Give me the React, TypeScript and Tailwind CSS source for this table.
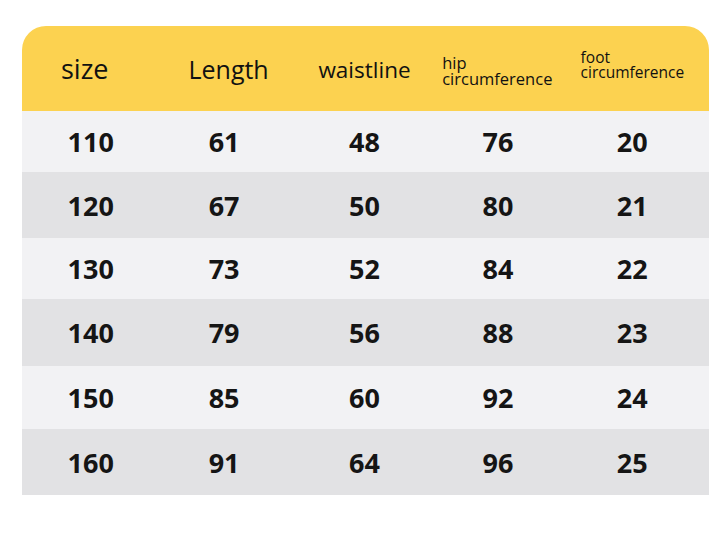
import React from "react";

const rows = [
  { v: ["110", "61", "48", "76", "20"], h: "h-[61px]", bg: "bg-[#f2f2f4]" },
  { v: ["120", "67", "50", "80", "21"], h: "h-[66px]", bg: "bg-[#e2e2e4]" },
  { v: ["130", "73", "52", "84", "22"], h: "h-[61px]", bg: "bg-[#f2f2f4]" },
  { v: ["140", "79", "56", "88", "23"], h: "h-[67px]", bg: "bg-[#e2e2e4]" },
  { v: ["150", "85", "60", "92", "24"], h: "h-[63px]", bg: "bg-[#f2f2f4]" },
  { v: ["160", "91", "64", "96", "25"], h: "h-[66px]", bg: "bg-[#e2e2e4]" },
];

const colPad = ["pr-[0px]", "pr-[8px]", "pr-[2px]", "pr-[10px]", "pr-[16px]"];

export default function App() {
  return (
    <div className="w-[727px] h-[534px] bg-white pt-[26px] pl-[22px]" style={{ fontFamily: '"Open Sans", "Noto Sans", sans-serif' }}>
      <div className="w-[687px]">
        <div className="h-[85px] bg-[#fcd250] rounded-t-[24px] grid grid-cols-5 items-center text-[#111]">
          <div className="pl-[39px] text-[27px] leading-none pb-[1px]">size</div>
          <div className="text-center text-[25px] leading-none pl-[1px] pt-[2px]">Length</div>
          <div className="text-center text-[22.5px] leading-none pr-[2px] pt-[3px]">waistline</div>
          <div className="pl-[8px] text-[16.5px] leading-[16px] pt-[4px]">
            <div>hip</div>
            <div>circumference</div>
          </div>
          <div className="pl-[9px] text-[15.5px] leading-[15.5px] pb-[7px]">
            <div>foot</div>
            <div>circumference</div>
          </div>
        </div>
        {rows.map((r, i) => (
          <div key={i} className={`grid grid-cols-5 items-center ${r.h} ${r.bg}`}>
            {r.v.map((t, j) => (
              <div
                key={j}
                className={`text-center text-[27px] font-bold text-[#151515] leading-none ${colPad[j]}`}
                style={{ fontFamily: '"Noto Sans", sans-serif' }}
              >
                {t}
              </div>
            ))}
          </div>
        ))}
      </div>
    </div>
  );
}
